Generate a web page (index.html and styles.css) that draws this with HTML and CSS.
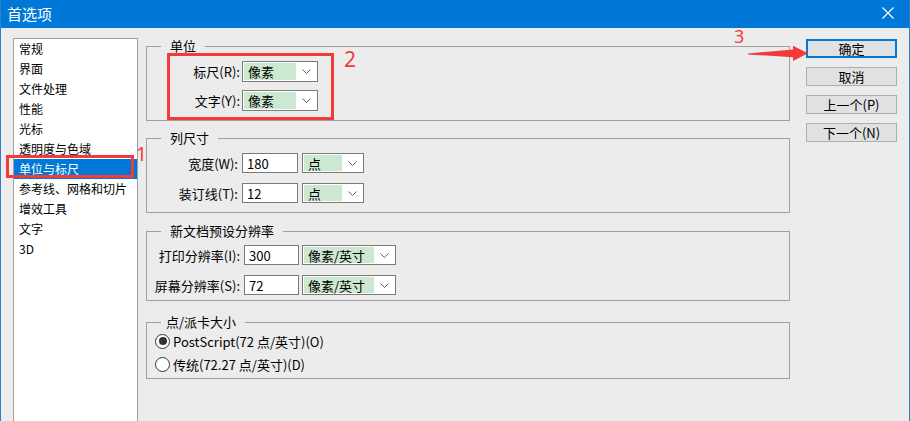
FILE: index.html
```html
<!DOCTYPE html>
<html lang="zh-CN">
<head>
<meta charset="utf-8">
<title>首选项</title>
<link rel="stylesheet" href="styles.css">
</head>
<body>
<div class="window">
  <div class="titlebar">
    <span class="title">首选项</span>
    <svg class="close" width="12" height="12" viewBox="0 0 12 12"><path d="M0.5 0.5 L11.5 11.5 M11.5 0.5 L0.5 11.5" stroke="#fff" stroke-width="1.2" fill="none"/></svg>
  </div>
  <div class="main">
    <ul class="list">
      <li>常规</li>
      <li>界面</li>
      <li>文件处理</li>
      <li>性能</li>
      <li>光标</li>
      <li>透明度与色域</li>
      <li class="sel">单位与标尺</li>
      <li>参考线、网格和切片</li>
      <li>增效工具</li>
      <li>文字</li>
      <li>3D</li>
    </ul>
    <div class="panels">
      <fieldset class="group g1">
        <legend>单位</legend>
        <div class="row">
          <span class="lbl">标尺(R):</span>
          <div class="select s1"><span class="val">像素</span><span class="arrow"><svg width="9" height="5" viewBox="0 0 9 5"><polyline points="0.5,0.5 4.5,4.5 8.5,0.5" fill="none" stroke="#606060" stroke-width="1"/></svg></span></div>
        </div>
        <div class="row">
          <span class="lbl">文字(Y):</span>
          <div class="select s1"><span class="val">像素</span><span class="arrow"><svg width="9" height="5" viewBox="0 0 9 5"><polyline points="0.5,0.5 4.5,4.5 8.5,0.5" fill="none" stroke="#606060" stroke-width="1"/></svg></span></div>
        </div>
      </fieldset>
      <fieldset class="group g2">
        <legend>列尺寸</legend>
        <div class="row">
          <span class="lbl">宽度(W):</span>
          <span class="input">180</span>
          <div class="select s2"><span class="val">点</span><span class="arrow"><svg width="9" height="5" viewBox="0 0 9 5"><polyline points="0.5,0.5 4.5,4.5 8.5,0.5" fill="none" stroke="#606060" stroke-width="1"/></svg></span></div>
        </div>
        <div class="row">
          <span class="lbl">装订线(T):</span>
          <span class="input">12</span>
          <div class="select s2"><span class="val">点</span><span class="arrow"><svg width="9" height="5" viewBox="0 0 9 5"><polyline points="0.5,0.5 4.5,4.5 8.5,0.5" fill="none" stroke="#606060" stroke-width="1"/></svg></span></div>
        </div>
      </fieldset>
      <fieldset class="group g3">
        <legend>新文档预设分辨率</legend>
        <div class="row">
          <span class="lbl">打印分辨率(I):</span>
          <span class="input">300</span>
          <div class="select s3"><span class="val">像素/英寸</span><span class="arrow"><svg width="9" height="5" viewBox="0 0 9 5"><polyline points="0.5,0.5 4.5,4.5 8.5,0.5" fill="none" stroke="#606060" stroke-width="1"/></svg></span></div>
        </div>
        <div class="row">
          <span class="lbl">屏幕分辨率(S):</span>
          <span class="input">72</span>
          <div class="select s3"><span class="val">像素/英寸</span><span class="arrow"><svg width="9" height="5" viewBox="0 0 9 5"><polyline points="0.5,0.5 4.5,4.5 8.5,0.5" fill="none" stroke="#606060" stroke-width="1"/></svg></span></div>
        </div>
      </fieldset>
      <fieldset class="group g4">
        <legend>点/派卡大小</legend>
        <div class="radio"><span class="dot on"></span><span>PostScript(72 点/英寸)(O)</span></div>
        <div class="radio"><span class="dot"></span><span>传统(72.27 点/英寸)(D)</span></div>
      </fieldset>
    </div>
    <div class="buttons">
      <div class="btn default">确定</div>
      <div class="btn">取消</div>
      <div class="btn">上一个(P)</div>
      <div class="btn">下一个(N)</div>
    </div>
  </div>
  <div class="mark box1"></div>
  <div class="mark box2"></div>
  <span class="num n1">1</span>
  <span class="num n2">2</span>
  <span class="num n3">3</span>
  <svg class="arrowmark" width="64" height="19" viewBox="0 0 64 19"><polygon points="2,9.4 47,5.6 47,1.7 62,9.3 47,17 47,13.3 2,10.4" fill="#f5383a"/></svg>
</div>
</body>
</html>
```

FILE: styles.css
```css
* { box-sizing: border-box; }
html, body { margin: 0; padding: 0; }
body {
  width: 910px;
  height: 421px;
  overflow: hidden;
  background: #ececec;
  font-family: "Noto Sans CJK SC", "Noto Sans", sans-serif;
  font-size: 13px;
  color: #000;
}
.window {
  position: relative;
  width: 910px;
  height: 421px;
  overflow: hidden;
  background: #ececec;
  border-left: 1px solid #2f7fce;
  border-right: 1px solid #2f7fce;
}
.titlebar {
  height: 28px;
  background: #0078d7;
  color: #fff;
  display: flex;
  align-items: center;
  justify-content: space-between;
  padding: 0 15px 0 6px;
}
.title { font-size: 15px; line-height: 20px; }
.close { display: block; margin-top: -2px; }

.main {
  display: flex;
  align-items: flex-start;
  padding: 10px 0 0 12px;
}
.list {
  width: 125px;
  height: 400px;
  margin: 0;
  padding: 0;
  list-style: none;
  background: #fff;
  border: 1px solid #a0a0a0;
  flex: none;
  font-size: 12px;
}
.list li {
  height: 20px;
  line-height: 20px;
  padding-left: 5px;
  white-space: nowrap;
}
.list li.sel { background: #0078d7; color: #fff; }

.panels { margin-left: 8px; width: 644px; flex: none; }
.group {
  margin: 0;
  padding: 0;
  border: 1px solid #a0a0a0;
  min-width: 0;
}
.group legend {
  margin-left: 14px;
  padding: 0 9px;
  height: 16px;
  line-height: 16px;
}
.g1 { height: 83px; padding-top: 7px; }
.g2 { height: 83px; padding-top: 7px; margin-top: 9px; }
.g3 { height: 78px; padding-top: 6px; margin-top: 10px; }
.g4 { height: 65px; padding-top: 3px; margin-top: 13px; }
.g4 legend { padding-left: 5px; }

.row { display: flex; align-items: stretch; }
.g1 .row { height: 21px; }
.g1 .row + .row { margin-top: 8px; }
.g2 .row, .g3 .row { height: 20px; }
.g2 .row + .row, .g3 .row + .row { margin-top: 10px; }

.lbl {
  width: 93px;
  margin-right: 2px;
  text-align: right;
  white-space: nowrap;
  display: flex;
  align-items: center;
  justify-content: flex-end;
}
.g2 .lbl { width: 91px; margin-right: 4px; }
.g3 .lbl { width: 93px; margin-right: 4px; }

.input {
  border: 1px solid #7a7a7a;
  background: #fff;
  padding-left: 4px;
  display: flex;
  align-items: center;
}
.g2 .input { width: 56px; margin-right: 4px; }
.g3 .input { width: 55px; margin-right: 3px; }

.select {
  display: flex;
  border: 1px solid #7a7a7a;
  background: #fff;
  padding: 1px;
}
.s1 { width: 76px; }
.s2 { width: 62px; }
.s3 { width: 94px; }
.select .val {
  flex: 1;
  background: #cde8d1;
  padding-left: 4px;
  display: flex;
  align-items: center;
  white-space: nowrap;
}
.select .arrow {
  width: 20px;
  display: flex;
  align-items: center;
  justify-content: center;
}
.select .arrow svg { display: block; }

.radio {
  display: flex;
  align-items: center;
  height: 16px;
  padding-left: 8px;
  gap: 3px;
  white-space: nowrap;
}
.radio + .radio { margin-top: 7px; }
.dot {
  width: 15px;
  height: 15px;
  border-radius: 50%;
  border: 1px solid #333;
  background: #fff;
  display: flex;
  align-items: center;
  justify-content: center;
  flex: none;
}
.dot.on::after {
  content: "";
  width: 8px;
  height: 8px;
  border-radius: 50%;
  background: #333;
}

.buttons {
  margin-left: 16px;
  width: 91px;
  padding-top: 1px;
  display: flex;
  flex-direction: column;
  gap: 9px;
  flex: none;
}
.btn {
  height: 19px;
  border: 1px solid #adadad;
  background: #e1e1e1;
  text-align: center;
  line-height: 17px;
  white-space: nowrap;
}
.btn.default { border: 2px solid #0078d7; line-height: 15px; }

.mark {
  position: absolute;
  border: 3px solid #f23b3b;
}
.box1 { left: 5px; top: 155px; width: 128px; height: 23px; }
.box2 { left: 166px; top: 53px; width: 167px; height: 67px; }
.num {
  position: absolute;
  color: #f5393b;
  font-family: "Noto Sans", sans-serif;
  line-height: 1;
}
.n1 { left: 135px; top: 145px; font-size: 19px; }
.n2 { left: 343px; top: 49px; font-size: 21px; }
.n3 { left: 733px; top: 27px; font-size: 18px; }
.arrowmark { position: absolute; left: 745px; top: 44px; }
```
